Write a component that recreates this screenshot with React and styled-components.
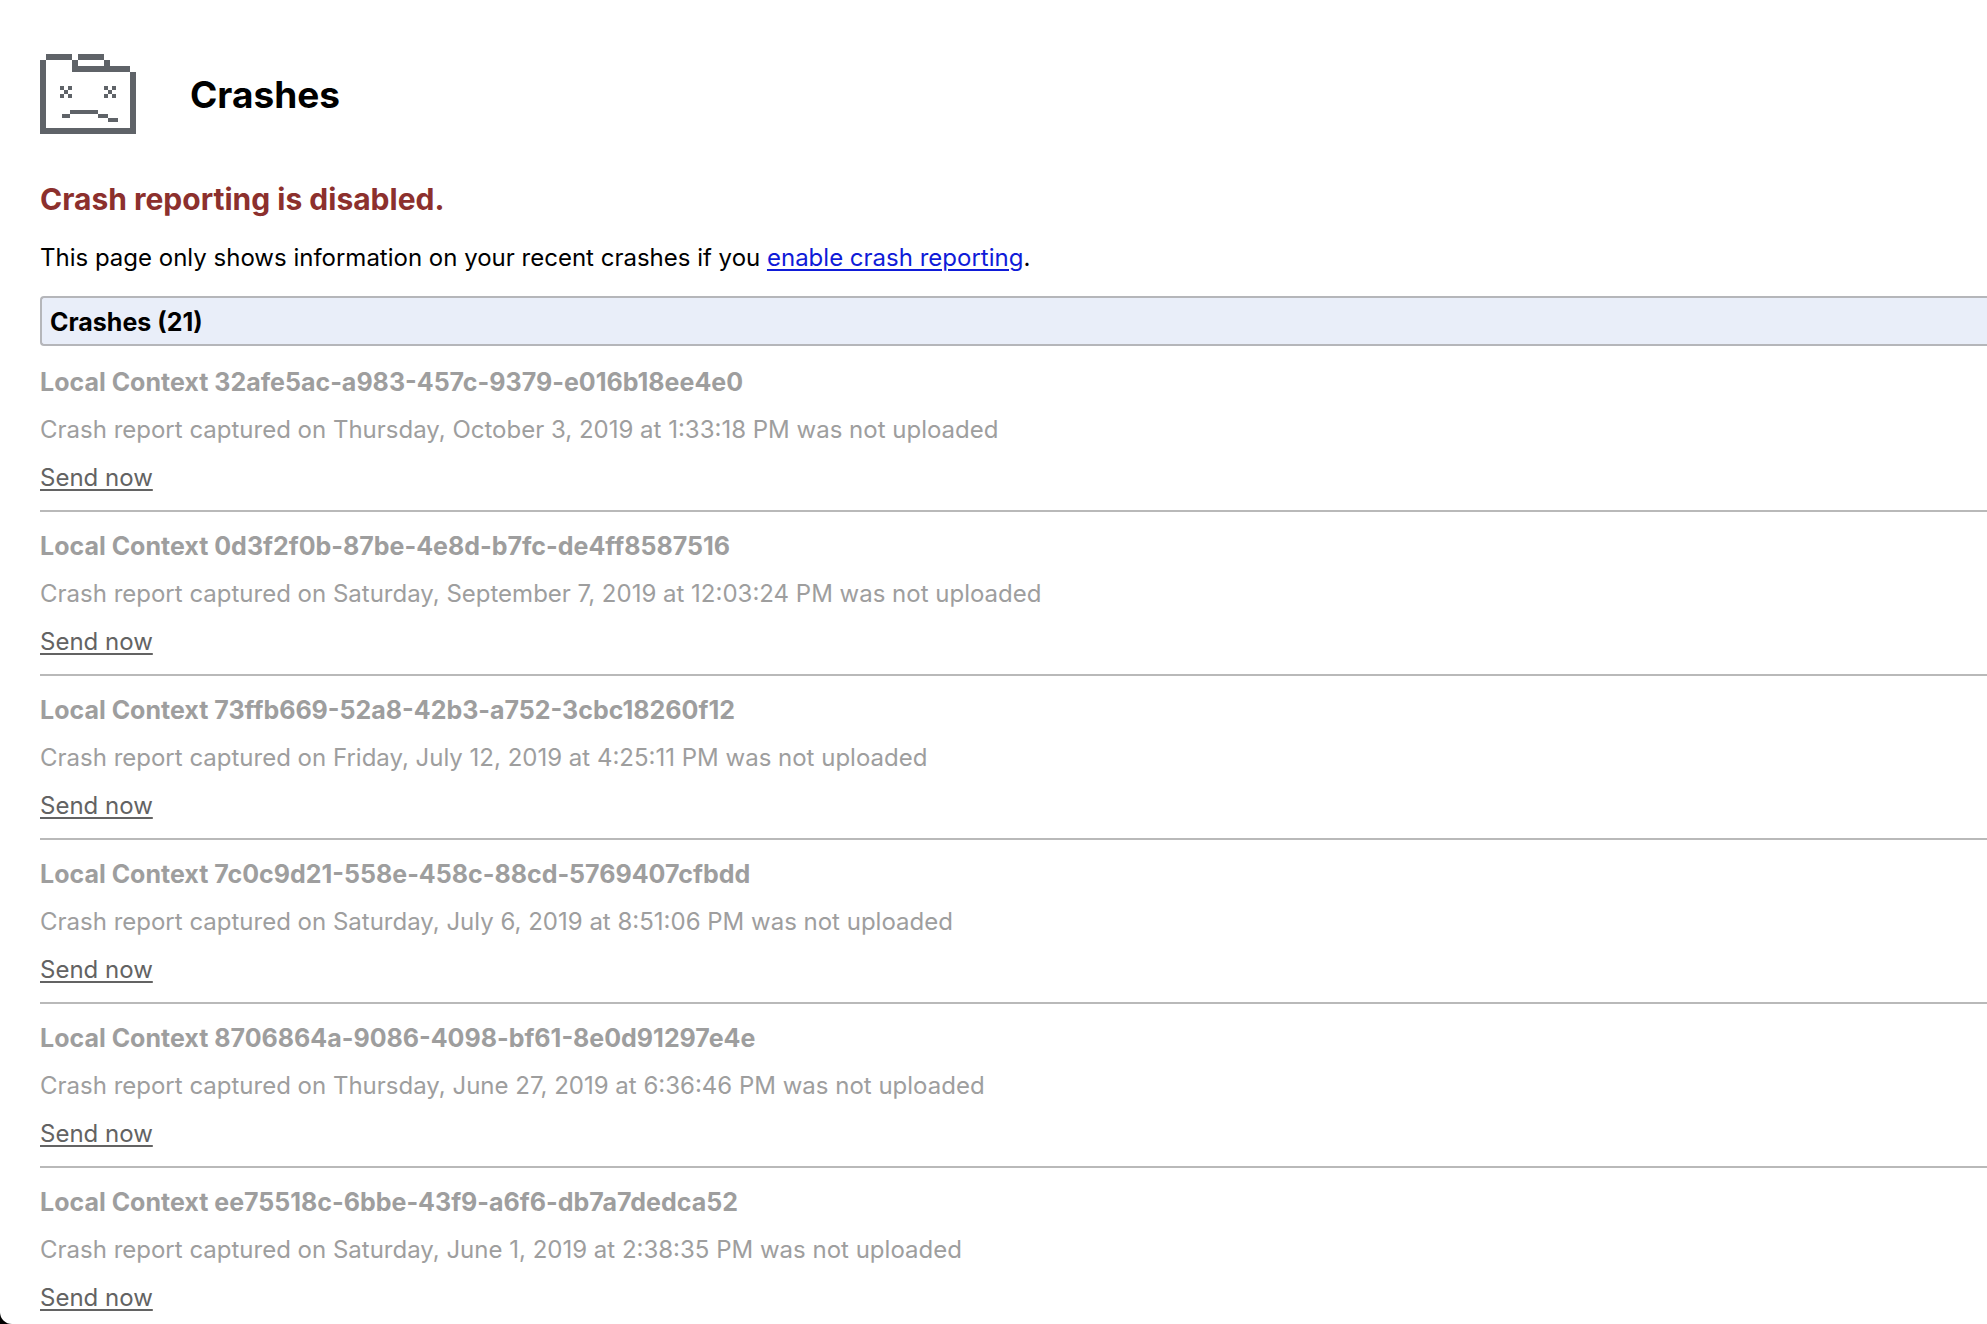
import React from 'react';
import styled, { createGlobalStyle } from 'styled-components';

const crashes = [
  {
    id: '32afe5ac-a983-457c-9379-e016b18ee4e0',
    captured: 'Thursday, October 3, 2019 at 1:33:18 PM'
  },
  {
    id: '0d3f2f0b-87be-4e8d-b7fc-de4ff8587516',
    captured: 'Saturday, September 7, 2019 at 12:03:24 PM'
  },
  {
    id: '73ffb669-52a8-42b3-a752-3cbc18260f12',
    captured: 'Friday, July 12, 2019 at 4:25:11 PM'
  },
  {
    id: '7c0c9d21-558e-458c-88cd-5769407cfbdd',
    captured: 'Saturday, July 6, 2019 at 8:51:06 PM'
  },
  {
    id: '8706864a-9086-4098-bf61-8e0d91297e4e',
    captured: 'Thursday, June 27, 2019 at 6:36:46 PM'
  },
  {
    id: 'ee75518c-6bbe-43f9-a6f6-db7a7dedca52',
    captured: 'Saturday, June 1, 2019 at 2:38:35 PM'
  }
];

const SadFolder = () => (
  <FolderIcon viewBox="0 0 96 80" shapeRendering="crispEdges" aria-hidden="true">
    <path d="M6 0h26v6H6zM38 0h26v6H38zM32 6h6v6h-6zM64 6h6v6h-6zM32 12h58v6H32z" />
    <path d="M0 6h6v68h84V18h6v62H0z" />
    <path d="M20 32h4v4h-4zM28 32h4v4h-4zM24 36h4v4h-4zM20 40h4v4h-4zM28 40h4v4h-4z" />
    <path d="M64 32h4v4h-4zM72 32h4v4h-4zM68 36h4v4h-4zM64 40h4v4h-4zM72 40h4v4h-4z" />
    <path d="M30 56h28v4H30zM22 60h8v4h-8zM58 60h10v4H58zM68 64h10v4H68z" />
  </FolderIcon>
);

const CrashItem = ({ id, captured }) => (
  <Crash>
    <CrashTitle>Local Context {id}</CrashTitle>
    <Text>Crash report captured on {captured} was not uploaded</Text>
    <SendButton type="button">Send now</SendButton>
  </Crash>
);

const App = () => (
  <Page>
    <GlobalStyle />
    <Header>
      <SadFolder />
      <Heading>Crashes</Heading>
    </Header>
    <Warning>Crash reporting is disabled.</Warning>
    <Text>
      This page only shows information on your recent crashes if you{' '}
      <a href="#enable">enable crash reporting</a>.
    </Text>
    <Banner>Crashes (21)</Banner>
    <CrashList>
      {crashes.map(crash => (
        <CrashItem key={crash.id} {...crash} />
      ))}
    </CrashList>
  </Page>
);

const GlobalStyle = createGlobalStyle`
  body {
    margin: 0;
    background-color: #000;
    color: #000;
    font-family: Inter, 'Liberation Sans', sans-serif;
    font-size: 24px;
    line-height: 30px;
  }
`;

const Page = styled.main`
  box-sizing: border-box;
  height: 100vh;
  overflow: hidden;
  padding: 54px 0 0 40px;
  background-color: #fff;
  border-bottom-left-radius: 12px;
`;

const Header = styled.header`
  display: flex;
  align-items: center;
  gap: 54px;
`;

const FolderIcon = styled.svg`
  width: 96px;
  height: 80px;
  fill: #5f6368;
`;

const Heading = styled.h1`
  margin: 0;
  padding-top: 2px;
  font-size: 37px;
  line-height: 48px;
`;

const Warning = styled.h2`
  margin: 47px 0 26px;
  color: #8c302d;
  font-size: 30px;
  line-height: 36px;
`;

const Text = styled.p`
  margin: 0;

  a {
    color: #0f1bd8;
    text-underline-offset: 3px;
    text-decoration-thickness: 2px;
  }
`;

const Banner = styled.h3`
  margin: 23px 0 2px;
  padding: 9px 8px 7px;
  border: 2px solid #b5b6ba;
  border-right: 0;
  border-radius: 4px 0 0 4px;
  background-color: #e9eef9;
  font-size: 25px;
  line-height: 30px;
`;

const CrashList = styled.ul`
  margin: 0;
  padding: 0;
  list-style: none;
`;

const Crash = styled.li`
  display: flex;
  flex-direction: column;
  align-items: flex-start;
  gap: 18px;
  padding: 19px 0 17px;
  border-bottom: 2px solid #b9b9b9;
  color: #9e9e9e;
`;

const CrashTitle = styled.h3`
  margin: 0;
  font-size: 25px;
`;

const SendButton = styled.button`
  padding: 0;
  border: 0;
  background: none;
  color: #636363;
  font: inherit;
  text-decoration: underline 2px;
  text-underline-offset: 3px;
  cursor: pointer;
`;

export default App;
